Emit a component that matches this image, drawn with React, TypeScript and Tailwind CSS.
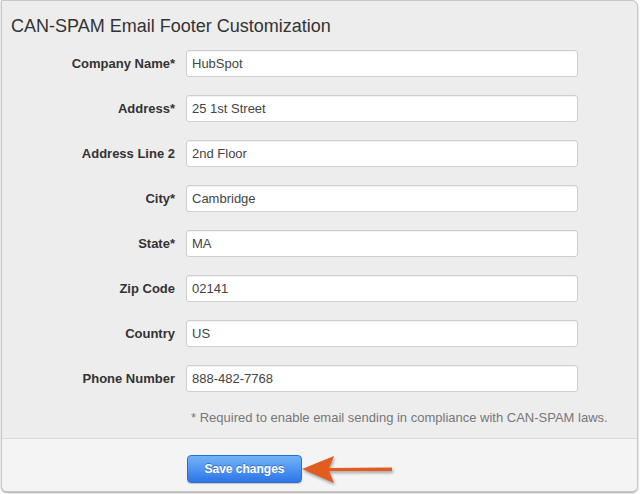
import React from 'react';

const fields = [
  { label: 'Company Name*', value: 'HubSpot' },
  { label: 'Address*', value: '25 1st Street' },
  { label: 'Address Line 2', value: '2nd Floor' },
  { label: 'City*', value: 'Cambridge' },
  { label: 'State*', value: 'MA' },
  { label: 'Zip Code', value: '02141' },
  { label: 'Country', value: 'US' },
  { label: 'Phone Number', value: '888-482-7768' },
];

export default function App() {
  return (
    <div className="w-[640px] h-[494px] bg-white pl-[1px] pr-[2px] pb-[2px]" style={{ fontFamily: '"Liberation Sans", Arial, sans-serif' }}>
      <div className="h-full rounded-b-md rounded-tr-md border border-[#c8c8c8] bg-[#ededed] shadow-[0_1px_2px_rgba(0,0,0,0.35)] flex flex-col overflow-hidden">
        {/* HEADER */}
        <h1 className="pl-[9px] pt-[14px] text-[18px] leading-[22px] text-[#333]">CAN-SPAM Email Footer Customization</h1>

        {/* FIELDS */}
        <div className="mt-[13px] flex flex-col gap-[18px]">
          {fields.map((f) => (
            <div key={f.label} className="flex items-center">
              <label className="w-[173px] text-right text-[13px] font-bold text-[#333]">{f.label}</label>
              <div className="ml-[11px] w-[392px] h-[27px] rounded-[3px] border border-[#cfcfcf] bg-white pl-[5px] text-[13px] leading-[25px] text-[#444] shadow-[inset_0_1px_1px_rgba(0,0,0,0.06)]">
                {f.value}
              </div>
            </div>
          ))}
        </div>

        {/* NOTE */}
        <p className="mt-[16px] pl-[189px] text-[13px] text-[#777]">* Required to enable email sending in compliance with CAN-SPAM laws.</p>

        {/* FOOTER */}
        <div className="mt-[10px] flex-1 border-t border-[#dadada] bg-[#f4f4f4] flex items-start pt-[16px] pl-[185px]">
          <button className="w-[115px] h-[28px] rounded-[4px] border border-[#2a6fd6] bg-gradient-to-b from-[#72b4f8] to-[#2d74e8] text-white text-[12px] font-bold [text-shadow:0_-1px_0_rgba(0,0,0,0.3)] shadow-[0_1px_1px_rgba(0,0,0,0.2)]">
            Save changes
          </button>
          <svg width="94" height="30" viewBox="0 0 94 30" className="-ml-[1px]" style={{ filter: 'drop-shadow(1px 2px 1.5px rgba(0,0,0,0.35))' }}>
            <path d="M1 14 L33 1 L28 13 L91 12.5 L91 16 L28 16 L33 28 Z" fill="#e25c20" />
          </svg>
        </div>
      </div>
    </div>
  );
}
